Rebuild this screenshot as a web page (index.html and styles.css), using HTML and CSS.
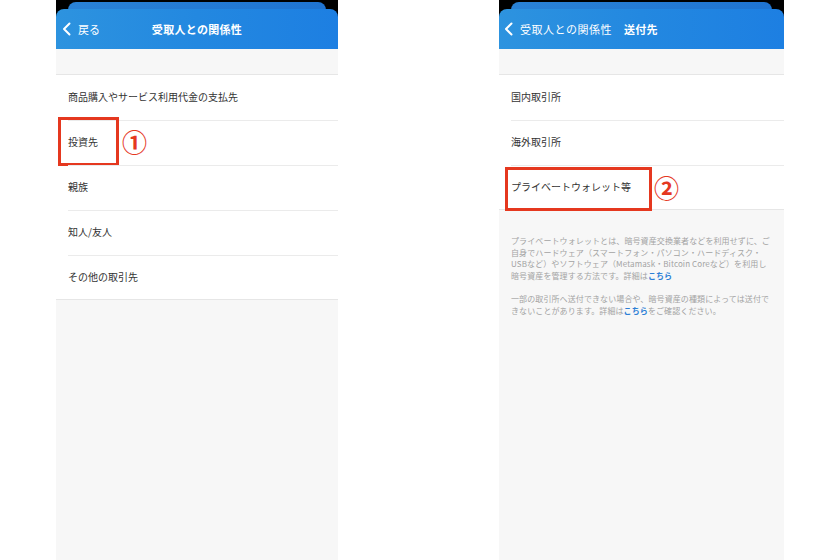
FILE: index.html
```html
<!DOCTYPE html>
<html lang="ja">
<head>
<meta charset="utf-8">
<link rel="stylesheet" href="styles.css">
</head>
<body>
<div class="stage">
  <section class="phone phone-left">
    <div class="top">
      <div class="back-card"></div>
      <div class="bar">
        <div class="nav-back">
          <svg class="chev" width="10" height="14" viewBox="0 0 10 14"><polyline points="7.5,1.5 2,7 7.5,12.5" fill="none" stroke="#fff" stroke-width="2" stroke-linecap="round" stroke-linejoin="round"/></svg>
          <span>戻る</span>
        </div>
        <div class="title">受取人との関係性</div>
      </div>
    </div>
    <ul class="list">
      <li class="row">商品購入やサービス利用代金の支払先</li>
      <li class="row">投資先<span class="mark mark-1"></span><span class="num num-1">①</span></li>
      <li class="row">親族</li>
      <li class="row">知人/友人</li>
      <li class="row">その他の取引先</li>
    </ul>
  </section>

  <section class="phone phone-right">
    <div class="top">
      <div class="back-card"></div>
      <div class="bar bar-right">
        <svg class="chev" width="10" height="14" viewBox="0 0 10 14"><polyline points="7.5,1.5 2,7 7.5,12.5" fill="none" stroke="#fff" stroke-width="2" stroke-linecap="round" stroke-linejoin="round"/></svg>
        <span class="prev">受取人との関係性</span>
        <span class="cur">送付先</span>
      </div>
    </div>
    <ul class="list">
      <li class="row">国内取引所</li>
      <li class="row">海外取引所</li>
      <li class="row">プライベートウォレット等<span class="mark mark-2"></span><span class="num num-2">②</span></li>
    </ul>
    <div class="notes">
      <p>プライベートウォレットとは、暗号資産交換業者などを利用せずに、ご<br>自身でハードウェア（スマートフォン・パソコン・ハードディスク・<br>USBなど）やソフトウェア（Metamask・Bitcoin Coreなど）を利用し<br>暗号資産を管理する方法です。詳細は<a class="link">こちら</a></p>
      <p>一部の取引所へ送付できない場合や、暗号資産の種類によっては送付で<br>きないことがあります。詳細は<a class="link">こちら</a>をご確認ください。</p>
    </div>
  </section>
</div>
</body>
</html>
```

FILE: styles.css
```css
html, body {
  margin: 0;
  padding: 0;
  background: #ffffff;
}
body {
  font-family: "Noto Sans CJK JP", "Noto Sans", sans-serif;
  color: #333;
}
.stage {
  display: flex;
  gap: 161px;
  padding-left: 56px;
  height: 560px;
  overflow: hidden;
}
.phone {
  position: relative;
  background: #f7f7f7;
  height: 560px;
}
.phone-left { width: 282px; }
.phone-right { width: 285px; }

.top {
  background: #000;
  padding-top: 2px;
  height: 47px;
}
.back-card {
  margin: 0 12px;
  height: 20px;
  border-radius: 8px 8px 0 0;
  background: linear-gradient(90deg, #2a82d6, #1f74d2);
}
.bar {
  position: relative;
  margin-top: -13px;
  height: 40px;
  border-radius: 8px 8px 0 0;
  background: linear-gradient(90deg, #2d93df 0%, #2388e0 50%, #1d7fe2 100%);
  display: flex;
  align-items: center;
  justify-content: center;
  color: #fff;
  font-size: 11px;
}
.nav-back {
  position: absolute;
  left: 6px;
  top: 0;
  bottom: 0;
  display: flex;
  align-items: center;
  gap: 6px;
  font-size: 11px;
}
.chev { display: block; }
.title {
  font-weight: 700;
  font-size: 11px;
  letter-spacing: 0.3px;
}
.bar-right {
  justify-content: flex-start;
  padding-left: 5px;
}
.bar-right .prev {
  margin-left: 6px;
  font-size: 11px;
  letter-spacing: 0.5px;
}
.bar-right .cur {
  margin-left: 12px;
  font-weight: 700;
  font-size: 11px;
  letter-spacing: 0.3px;
}

.list {
  list-style: none;
  margin: 25px 0 0;
  padding: 0;
  background: #fff;
  border-top: 1px solid #e6e6e6;
  border-bottom: 1px solid #e6e6e6;
}
.row {
  position: relative;
  height: 44px;
  line-height: 44px;
  padding-left: 12px;
  font-size: 10px;
  color: #333;
}
.row + .row::before {
  content: "";
  position: absolute;
  left: 12px;
  right: 0;
  top: 0;
  height: 1px;
  background: #ebebeb;
}
.row + .row { border-top: 1px solid transparent; }

.mark {
  position: absolute;
  border: 3px solid #e5381f;
  box-sizing: border-box;
}
.mark-1 {
  left: 2px;
  top: -3px;
  width: 61px;
  height: 49px;
}
.mark-2 {
  left: 6px;
  top: 2px;
  width: 147px;
  height: 44px;
}
.num {
  position: absolute;
  color: #e5381f;
  font-size: 25px;
  line-height: 25px;
  font-weight: 700;
}
.num-1 { left: 66px; top: 9px; }
.num-2 { left: 155px; top: 10px; }

.notes {
  padding: 25px 12px 0;
  font-size: 8px;
  line-height: 11.7px;
  color: #a3a3a3;
  white-space: nowrap;
  letter-spacing: 0.1px;
}
.notes p { margin: 0 0 11px; }
.link { color: #2d7fd6; font-weight: 700; }
```
